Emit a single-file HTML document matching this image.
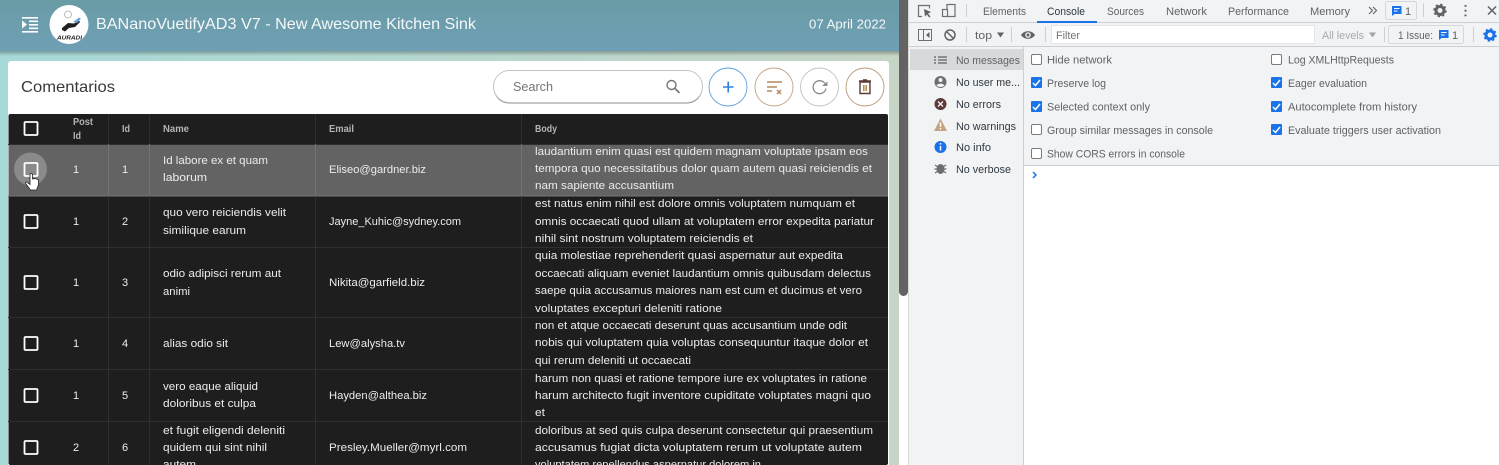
<!DOCTYPE html>
<html><head><meta charset="utf-8"><title>Kitchen Sink</title>
<style>
html,body{margin:0;padding:0;width:1499px;height:465px;overflow:hidden;background:#fff}
svg{display:block;position:absolute;left:0;top:0;filter:blur(.35px)}
text{font-family:"Liberation Sans",sans-serif}
.c{fill:#ececec;font-size:11px}
.h{fill:#b4b4b4;font-size:10px;font-weight:bold}
.d{fill:#5f6368;font-size:11px}
.e{fill:#303942;font-size:11px}
.cb{fill:none;stroke:#fff;stroke-width:1.8}
.ln{stroke:#2f2f2f;stroke-width:1}
</style></head><body>
<svg width="1499" height="465" viewBox="0 0 1499 465" xmlns="http://www.w3.org/2000/svg">
<defs>
<linearGradient id="bg" x1="0" x2="1" y1="0" y2="0"><stop offset="0" stop-color="#a6d9d8"/><stop offset="1" stop-color="#c6d5c5"/></linearGradient>
<linearGradient id="hd" x1="0" x2="0" y1="0" y2="1"><stop offset="0" stop-color="#6a9ca6"/><stop offset="1" stop-color="#6e9fb5"/></linearGradient>
<linearGradient id="sh" x1="0" x2="0" y1="0" y2="1"><stop offset="0" stop-color="#000" stop-opacity=".28"/><stop offset="1" stop-color="#000" stop-opacity="0"/></linearGradient>
</defs>
<rect x="0" y="0" width="899" height="465" fill="url(#bg)"/>
<rect x="0" y="51" width="899" height="5" fill="url(#sh)"/>
<rect x="0" y="0" width="899" height="51" fill="url(#hd)"/>
<rect x="899" y="0" width="10" height="465" fill="#fff"/>
<rect x="899" y="0" width="9" height="292" fill="#636363"/>
<rect x="899" y="286" width="9" height="10" rx="4.5" fill="#636363"/>
<rect x="908" y="0" width="1" height="465" fill="#d8d8d8"/>

<!-- header -->
<path d="M22 17h16v1.600H22zM29 20.500h9v1.600h-9zM29 24h9v1.600h-9zM29 27.500h9v1.600h-9zM22 31h16v1.600H22zM22 20.500l5 4-5 4z" fill="#fff"/>
<circle cx="69" cy="24.500" r="19.500" fill="#fff"/>
<path d="M62 28l6-5 6 .5 5-3 1 1.500-5 5-6 1-4 3.500-3-1.500z" fill="#222"/>
<path d="M73 22l6-4.500 2 1-4 4.500z" fill="#6fa8dc"/>
<circle cx="68" cy="14.500" r="3.500" fill="none" stroke="#aaa" stroke-width=".8"/>
<text x="57" y="39.500" font-size="5" font-weight="bold" font-style="italic" fill="#222" textLength="25" lengthAdjust="spacingAndGlyphs">AURADI</text>
<text x="96" y="29" font-size="16" fill="#f4f8f8" textLength="380" lengthAdjust="spacingAndGlyphs">BANanoVuetifyAD3 V7 - New Awesome Kitchen Sink</text>
<text x="809" y="28.500" font-size="13" fill="#f4f8f8" textLength="77" lengthAdjust="spacingAndGlyphs">07 April 2022</text>

<!-- card -->
<rect x="8" y="61" width="881" height="410" rx="3" fill="#fff"/>
<text x="21" y="92" font-size="16" fill="#3a3a3a" textLength="94" lengthAdjust="spacingAndGlyphs">Comentarios</text>
<rect x="493.500" y="72" width="209" height="31.500" rx="15.500" fill="#8f8f8f"/>
<rect x="493.500" y="70.500" width="209" height="32" rx="16" fill="#fff" stroke="#c4c4c4"/>
<text x="513" y="91" font-size="12.500" fill="#757575" textLength="40" lengthAdjust="spacingAndGlyphs">Search</text>
<circle cx="671.500" cy="85" r="4.500" fill="none" stroke="#757575" stroke-width="1.400"/><path d="M675 88.500l4.500 4.500" stroke="#757575" stroke-width="1.600"/>
<circle cx="728" cy="87" r="19" fill="#fff" stroke="#5a9fdc" stroke-width=".9"/>
<path d="M723 87h10.500M728.200 81.500v11" stroke="#2c80e0" stroke-width="1.600"/>
<circle cx="774" cy="87" r="19" fill="#fff" stroke="#c2a582" stroke-width=".9"/>
<path d="M767 82h15M767 87h10M767 91h5M777 90l4 4M781 90l-4 4" stroke="#b58a5e" stroke-width="1.500" fill="none"/>
<circle cx="819.500" cy="87" r="19" fill="#fff" stroke="#c2c2c2" stroke-width=".9"/>
<path d="M825 83.500a6.500 6.500 0 1 0 1 5" stroke="#8c8c8c" stroke-width="1.300" fill="none"/><path d="M822 86h5.500v-4.500z" fill="#8c8c8c"/>
<circle cx="865" cy="87" r="19" fill="#fff" stroke="#b99a75" stroke-width=".9"/>
<path d="M860 82h10v11.500h-10zM859 81h12M863 80h4" fill="none" stroke="#5d3a32" stroke-width="1.400"/><path d="M863.800 85v6M866.200 85v6" stroke="#a9823f" stroke-width="1.400"/>

<!-- table -->
<rect x="8.500" y="114" width="879.500" height="351" rx="2" fill="#1e1e1e"/>
<rect x="8.500" y="144" width="879.500" height="52" fill="#636363"/>
<path class="ln" d="M8 144.500h880M8 247.500h880M8 317.500h880M8 369.500h880M8 421.500h880"/>
<path d="M8 196h880" stroke="#777" stroke-width="1"/>
<path class="ln" d="M108.500 114v351M149.500 114v351M315.500 114v351M521.500 114v351"/>
<path d="M108.500 144v52M149.500 144v52M315.500 144v52M521.500 144v52" stroke="#737373"/>

<text class="h" x="73" y="125" textLength="20" lengthAdjust="spacingAndGlyphs">Post</text>
<text class="h" x="73" y="139" textLength="8" lengthAdjust="spacingAndGlyphs">Id</text>
<text class="h" x="122" y="132" textLength="8" lengthAdjust="spacingAndGlyphs">Id</text>
<text class="h" x="163" y="132" textLength="26" lengthAdjust="spacingAndGlyphs">Name</text>
<text class="h" x="329" y="132" textLength="25" lengthAdjust="spacingAndGlyphs">Email</text>
<text class="h" x="535" y="132" textLength="22" lengthAdjust="spacingAndGlyphs">Body</text>

<rect class="cb" x="24.500" y="122" width="13" height="13" rx="1"/>
<circle cx="30.500" cy="169" r="16.500" fill="#8a8a8a"/>
<rect class="cb" x="24.500" y="163" width="13" height="13" rx="1"/>
<rect class="cb" x="24.500" y="215" width="13" height="13" rx="1"/>
<rect class="cb" x="24.500" y="276" width="13" height="13" rx="1"/>
<rect class="cb" x="24.500" y="337" width="13" height="13" rx="1"/>
<rect class="cb" x="24.500" y="389" width="13" height="13" rx="1"/>
<rect class="cb" x="24.500" y="441" width="13" height="13" rx="1"/>
<path d="M30 175c0-2 2.500-2 2.500 0v4c2-1 5 0 6 1v5l-2 5h-6l-4.500-6c-1-2 1-3 2-1l2 1.500z" fill="#fff" stroke="#222" stroke-width=".8"/>

<g class="c">
<text x="73" y="173">1</text><text x="122" y="173">1</text>
<text x="73" y="225">1</text><text x="122" y="225">2</text>
<text x="73" y="286">1</text><text x="122" y="286">3</text>
<text x="73" y="347">1</text><text x="122" y="347">4</text>
<text x="73" y="399">1</text><text x="122" y="399">5</text>
<text x="73" y="451">2</text><text x="122" y="451">6</text>

<text x="163" y="164" textLength="105" lengthAdjust="spacingAndGlyphs">Id labore ex et quam</text>
<text x="163" y="181" textLength="44" lengthAdjust="spacingAndGlyphs">laborum</text>
<text x="163" y="216" textLength="123" lengthAdjust="spacingAndGlyphs">quo vero reiciendis velit</text>
<text x="163" y="234" textLength="83" lengthAdjust="spacingAndGlyphs">similique earum</text>
<text x="163" y="277" textLength="118" lengthAdjust="spacingAndGlyphs">odio adipisci rerum aut</text>
<text x="163" y="295" textLength="27" lengthAdjust="spacingAndGlyphs">animi</text>
<text x="163" y="347" textLength="65" lengthAdjust="spacingAndGlyphs">alias odio sit</text>
<text x="163" y="390" textLength="95" lengthAdjust="spacingAndGlyphs">vero eaque aliquid</text>
<text x="163" y="407" textLength="93" lengthAdjust="spacingAndGlyphs">doloribus et culpa</text>
<text x="163" y="434" textLength="122" lengthAdjust="spacingAndGlyphs">et fugit eligendi deleniti</text>
<text x="163" y="451" textLength="104" lengthAdjust="spacingAndGlyphs">quidem qui sint nihil</text>
<text x="163" y="468" textLength="33" lengthAdjust="spacingAndGlyphs">autem</text>

<text x="329" y="173" textLength="97" lengthAdjust="spacingAndGlyphs">Eliseo@gardner.biz</text>
<text x="329" y="225" textLength="132" lengthAdjust="spacingAndGlyphs">Jayne_Kuhic@sydney.com</text>
<text x="329" y="286" textLength="96" lengthAdjust="spacingAndGlyphs">Nikita@garfield.biz</text>
<text x="329" y="347" textLength="76" lengthAdjust="spacingAndGlyphs">Lew@alysha.tv</text>
<text x="329" y="399" textLength="98" lengthAdjust="spacingAndGlyphs">Hayden@althea.biz</text>
<text x="329" y="451" textLength="138" lengthAdjust="spacingAndGlyphs">Presley.Mueller@myrl.com</text>

<text x="535" y="155" textLength="333" lengthAdjust="spacingAndGlyphs">laudantium enim quasi est quidem magnam voluptate ipsam eos</text>
<text x="535" y="172" textLength="337" lengthAdjust="spacingAndGlyphs">tempora quo necessitatibus dolor quam autem quasi reiciendis et</text>
<text x="535" y="189" textLength="139" lengthAdjust="spacingAndGlyphs">nam sapiente accusantium</text>
<text x="535" y="207" textLength="320" lengthAdjust="spacingAndGlyphs">est natus enim nihil est dolore omnis voluptatem numquam et</text>
<text x="535" y="225" textLength="339" lengthAdjust="spacingAndGlyphs">omnis occaecati quod ullam at voluptatem error expedita pariatur</text>
<text x="535" y="242" textLength="218" lengthAdjust="spacingAndGlyphs">nihil sint nostrum voluptatem reiciendis et</text>
<text x="535" y="259" textLength="308" lengthAdjust="spacingAndGlyphs">quia molestiae reprehenderit quasi aspernatur aut expedita</text>
<text x="535" y="277" textLength="336" lengthAdjust="spacingAndGlyphs">occaecati aliquam eveniet laudantium omnis quibusdam delectus</text>
<text x="535" y="294" textLength="327" lengthAdjust="spacingAndGlyphs">saepe quia accusamus maiores nam est cum et ducimus et vero</text>
<text x="535" y="312" textLength="187" lengthAdjust="spacingAndGlyphs">voluptates excepturi deleniti ratione</text>
<text x="535" y="329" textLength="312" lengthAdjust="spacingAndGlyphs">non et atque occaecati deserunt quas accusantium unde odit</text>
<text x="535" y="346" textLength="333" lengthAdjust="spacingAndGlyphs">nobis qui voluptatem quia voluptas consequuntur itaque dolor et</text>
<text x="535" y="364" textLength="156" lengthAdjust="spacingAndGlyphs">qui rerum deleniti ut occaecati</text>
<text x="535" y="382" textLength="332" lengthAdjust="spacingAndGlyphs">harum non quasi et ratione tempore iure ex voluptates in ratione</text>
<text x="535" y="399" textLength="336" lengthAdjust="spacingAndGlyphs">harum architecto fugit inventore cupiditate voluptates magni quo</text>
<text x="535" y="416" textLength="10" lengthAdjust="spacingAndGlyphs">et</text>
<text x="535" y="434" textLength="338" lengthAdjust="spacingAndGlyphs">doloribus at sed quis culpa deserunt consectetur qui praesentium</text>
<text x="535" y="451" textLength="327" lengthAdjust="spacingAndGlyphs">accusamus fugiat dicta voluptatem rerum ut voluptate autem</text>
<text x="535" y="468" textLength="226" lengthAdjust="spacingAndGlyphs">voluptatem repellendus aspernatur dolorem in</text>
</g>

<!-- devtools -->
<rect x="909" y="0" width="590" height="465" fill="#f1f3f4"/>
<rect x="1024" y="166" width="475" height="299" fill="#fff"/>
<path d="M909 22.500h590M909 46.500h590M1024 165.500h475" stroke="#cdcfd2" fill="none"/>
<path d="M1023.500 47v418" stroke="#cdcfd2"/>
<rect x="910" y="49" width="113" height="21" fill="#d8d9da"/>

<path d="M922 16.500h-3.500v-11h11v3" fill="none" stroke="#6e6e6e" stroke-width="1.200"/><path d="M924 9l7 3-3 1.500 2.500 3-1.500 1-2-3-2 2z" fill="#5f6368"/>
<rect x="947" y="4.500" width="8" height="12" fill="none" stroke="#6e6e6e" stroke-width="1.200"/><rect x="942.500" y="9.500" width="5" height="7" fill="#f1f3f4" stroke="#6e6e6e" stroke-width="1.200"/>
<path d="M966.500 4v13" stroke="#cdcfd2"/>
<text class="d" x="983" y="15" textLength="43" lengthAdjust="spacingAndGlyphs">Elements</text>
<text class="e" x="1047" y="15" textLength="38" lengthAdjust="spacingAndGlyphs">Console</text>
<rect x="1037" y="21" width="60" height="2" fill="#1a73e8"/>
<text class="d" x="1107" y="15" textLength="37" lengthAdjust="spacingAndGlyphs">Sources</text>
<text class="d" x="1166" y="15" textLength="41" lengthAdjust="spacingAndGlyphs">Network</text>
<text class="d" x="1228" y="15" textLength="61" lengthAdjust="spacingAndGlyphs">Performance</text>
<text class="d" x="1310" y="15" textLength="40" lengthAdjust="spacingAndGlyphs">Memory</text>
<path d="M1369 7l3.500 3.500-3.500 3.500M1373 7l3.500 3.500-3.500 3.500" fill="none" stroke="#5f6368" stroke-width="1.100"/>
<rect x="1385.500" y="1.500" width="31" height="18" rx="2" fill="none" stroke="#d5d7da"/>
<path d="M1392 6h9.500v8h-7l-2.500 2z" fill="#1a73e8"/><path d="M1394 8.500h5.500M1394 11h3.500" stroke="#fff"/>
<text class="d" x="1405" y="15">1</text>
<path d="M1423.500 3v14" stroke="#cdcfd2"/>
<circle cx="1440" cy="10.500" r="4" fill="none" stroke="#5f6368" stroke-width="3"/><circle cx="1440" cy="10.500" r="6" fill="none" stroke="#5f6368" stroke-width="1.500" stroke-dasharray="2.300 2.400"/>
<path d="M1465.500 5v1.800M1465.500 9.800v1.800M1465.500 14.500v1.800" stroke="#5f6368" stroke-width="2"/>
<path d="M1488 6.500l8 8M1496 6.500l-8 8" stroke="#5f6368" stroke-width="1.500"/>

<rect x="918.500" y="29.500" width="13" height="11" fill="none" stroke="#6e6e6e"/><path d="M923.500 29.500v11" stroke="#6e6e6e"/><path d="M929.500 32v6l-3.500-3z" fill="#5f6368"/>
<circle cx="950" cy="35" r="5" fill="none" stroke="#5f6368" stroke-width="1.500"/><path d="M946.500 31.500l7 7" stroke="#5f6368" stroke-width="1.500"/>
<path d="M966.500 27v15M1011.500 27v15M1045.500 27v15M1384.500 27v15M1473.500 27v15" stroke="#cdcfd2"/>
<text class="d" x="975" y="39" textLength="17" lengthAdjust="spacingAndGlyphs">top</text>
<path d="M997 32.500h7l-3.500 5z" fill="#5f6368"/>
<path d="M1021 35c3-5 11-5 14 0c-3 5-11 5-14 0z" fill="#5f6368"/><circle cx="1028" cy="35" r="2.800" fill="#f1f3f4"/><circle cx="1028" cy="35" r="1.500" fill="#5f6368"/>
<rect x="1051.500" y="25.500" width="263" height="18" fill="#fff" stroke="#e3e5e7"/>
<text x="1056" y="39" font-size="11" fill="#757575" textLength="24" lengthAdjust="spacingAndGlyphs">Filter</text>
<text x="1322" y="39" font-size="11" fill="#a8abaf" textLength="42" lengthAdjust="spacingAndGlyphs">All levels</text>
<path d="M1369 32.500h7l-3.500 5z" fill="#a0a3a7"/>
<rect x="1388.500" y="25.500" width="75" height="18" rx="2" fill="none" stroke="#d5d7da"/>
<text class="d" x="1398" y="39" textLength="35" lengthAdjust="spacingAndGlyphs">1 Issue:</text>
<path d="M1439 30h9.500v8h-7l-2.500 2z" fill="#1a73e8"/><path d="M1441 32.500h5.500M1441 35h3.500" stroke="#fff"/>
<text class="d" x="1452" y="39">1</text>
<circle cx="1490" cy="35" r="4" fill="none" stroke="#1a73e8" stroke-width="3"/><circle cx="1490" cy="35" r="6" fill="none" stroke="#1a73e8" stroke-width="1.500" stroke-dasharray="2.300 2.400"/>

<!-- sidebar -->
<path d="M934 57h2M934 60h2M934 63h2M938 57h9M938 60h9M938 63h9" stroke="#5f6368" stroke-width="1.300"/>
<text class="d" x="956" y="64" textLength="64" lengthAdjust="spacingAndGlyphs">No messages</text>
<circle cx="940.500" cy="82" r="6" fill="#6b6f73"/><circle cx="940.500" cy="80" r="2" fill="#f1f3f4"/><path d="M936.500 85.500c1.500-2.500 6.500-2.500 8 0-2 2-6 2-8 0z" fill="#f1f3f4"/>
<text class="e" x="956" y="86" textLength="64" lengthAdjust="spacingAndGlyphs">No user me...</text>
<circle cx="940.500" cy="104" r="6" fill="#5d3a36"/><path d="M938 101.500l5 5M943 101.500l-5 5" stroke="#f1f3f4" stroke-width="1.300"/>
<text class="e" x="956" y="108" textLength="45" lengthAdjust="spacingAndGlyphs">No errors</text>
<path d="M940.500 118.500l6.500 12.500h-13z" fill="#c4a47f"/><path d="M940.500 122.500v4.500M940.500 128v1.500" stroke="#fff" stroke-width="1.400"/>
<text class="e" x="956" y="130" textLength="60" lengthAdjust="spacingAndGlyphs">No warnings</text>
<circle cx="940.500" cy="147" r="6" fill="#1a73e8"/><path d="M940.500 146v4.500M940.500 143v1.600" stroke="#fff" stroke-width="1.500"/>
<text class="e" x="956" y="151" textLength="35" lengthAdjust="spacingAndGlyphs">No info</text>
<ellipse cx="940.500" cy="169" rx="4" ry="5" fill="#6b6f73"/><path d="M935 165l3 2M946 165l-3 2M934.500 169h3M946.500 169h-3M935 173l3-2M946 173l-3-2" stroke="#6b6f73" stroke-width="1.200"/>
<text class="e" x="956" y="173" textLength="55" lengthAdjust="spacingAndGlyphs">No verbose</text>

<!-- checkboxes -->
<g fill="#fff" stroke="#7a7a7a"><rect x="1031.500" y="54.500" width="10" height="10" rx="1.500"/><rect x="1031.500" y="124.500" width="10" height="10" rx="1.500"/><rect x="1031.500" y="148.500" width="10" height="10" rx="1.500"/><rect x="1271.500" y="54.500" width="10" height="10" rx="1.500"/></g>
<g fill="#1a73e8"><rect x="1031" y="77" width="11" height="11" rx="1"/><rect x="1031" y="101" width="11" height="11" rx="1"/><rect x="1271" y="77" width="11" height="11" rx="1"/><rect x="1271" y="101" width="11" height="11" rx="1"/><rect x="1271" y="124" width="11" height="11" rx="1"/></g>
<g fill="none" stroke="#fff" stroke-width="1.500"><path d="M1033 83l2.500 2.500 4.500-5.500M1033 107l2.500 2.500 4.500-5.500M1273 83l2.500 2.500 4.500-5.500M1273 107l2.500 2.500 4.500-5.500M1273 130l2.500 2.500 4.500-5.500"/></g>
<g class="d">
<text x="1047" y="63.500" textLength="65" lengthAdjust="spacingAndGlyphs">Hide network</text>
<text x="1047" y="87" textLength="59" lengthAdjust="spacingAndGlyphs">Preserve log</text>
<text x="1047" y="110.500" textLength="103" lengthAdjust="spacingAndGlyphs">Selected context only</text>
<text x="1047" y="134" textLength="166" lengthAdjust="spacingAndGlyphs">Group similar messages in console</text>
<text x="1047" y="157.500" textLength="138" lengthAdjust="spacingAndGlyphs">Show CORS errors in console</text>
<text x="1288" y="63.500" textLength="106" lengthAdjust="spacingAndGlyphs">Log XMLHttpRequests</text>
<text x="1288" y="87" textLength="79" lengthAdjust="spacingAndGlyphs">Eager evaluation</text>
<text x="1288" y="110.500" textLength="129" lengthAdjust="spacingAndGlyphs">Autocomplete from history</text>
<text x="1288" y="134" textLength="153" lengthAdjust="spacingAndGlyphs">Evaluate triggers user activation</text>
</g>
<path d="M1033 172l3 3-3 3" fill="none" stroke="#1a73e8" stroke-width="1.500"/>
</svg>
</body></html>
